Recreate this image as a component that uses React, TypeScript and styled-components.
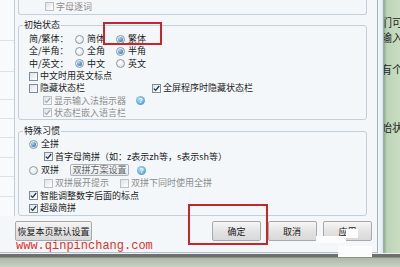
import React from 'react'
import styled, { createGlobalStyle } from 'styled-components'

const GlobalStyle = createGlobalStyle`
  html, body {
    margin: 0;
    padding: 0;
    width: 400px;
    height: 267px;
    overflow: hidden;
  }
  body {
    font-family: "Noto Sans CJK SC", "Liberation Sans", sans-serif;
    font-size: 9px;
    color: #1b1b1b;
  }
`

const Screen = styled.div`
  position: relative;
  width: 400px;
  height: 267px;
  display: flex;
  flex-direction: column;
  overflow: hidden;
`

const TopArea = styled.div`
  display: flex;
  height: 253px;
`

const Dialog = styled.div`
  position: relative;
  width: 378px;
  height: 253px;
  box-sizing: border-box;
  display: flex;
  flex-direction: column;
  background: #f3f7fa;
  border-right: 1px solid #9fb0bd;
  border-bottom: 1px solid #b4c1cb;
`

const Frame = styled.div`
  width: 5px;
  background: linear-gradient(90deg, #f4f8fa, #dfe8ee);
  border-right: 1px solid #9aa9b4;
`

const GreenStrip = styled.div`
  flex: 1;
  overflow: hidden;
  padding-top: 17px;
  background: linear-gradient(90deg, #93ab90 0, #bcd5b5 3px, #c8ddc2 100%);
  font-size: 11px;
  line-height: 11px;
  color: #262626;
`

const StripLine = styled.div<{ $mt: number }>`
  margin-top: ${p => p.$mt}px;
  margin-left: -3px;
  white-space: nowrap;
`

const BottomBand = styled.div`
  flex: 1;
  background: linear-gradient(#e6ecef 0, #e6ecef 1px, #727272 1px, #6a6a6a 4px, #aeb8ab 5px, #c7d2c3 100%);
`

const Body = styled.div`
  display: flex;
  height: 216px;
`

const Sidebar = styled.div`
  width: 15px;
  box-sizing: border-box;
  background: #f8fafc;
  border-right: 1px solid #c5cfd8;
  display: flex;
  flex-direction: column;
`

const SideRow = styled.div<{ $h: number }>`
  height: ${p => p.$h}px;
  border-bottom: 1px solid #dbe2e8;
  flex: none;
`

const Groups = styled.div`
  width: 349px;
  margin-left: 3px;
  display: flex;
  flex-direction: column;
`

const CutGroup = styled.div`
  height: 15px;
  box-sizing: border-box;
  border: 1px solid #c3cfd9;
  border-top: none;
  border-radius: 0 0 3px 3px;
  padding-left: 26px;
`

const Group = styled.fieldset<{ $mt: number; $pt: number }>`
  margin: ${p => p.$mt}px 0 0;
  padding: ${p => p.$pt}px 0 0 10px;
  border: 1px solid #c3cfd9;
  border-radius: 3px;
  min-width: 0;
`

const Legend = styled.legend`
  margin-left: -6px;
  padding: 0 1px;
  line-height: 10px;
  font-size: 9px;
  color: #1b1b1b;
`

const Row = styled.div<{ $h?: number; $indent?: number }>`
  display: flex;
  align-items: center;
  height: ${p => p.$h ?? 12.3}px;
  padding-left: ${p => p.$indent ?? 0}px;
  white-space: nowrap;
  line-height: 10px;
`

const Label = styled.span`
  width: 46px;
  flex: none;
`

const Item = styled.span<{ $w?: number; $disabled?: boolean }>`
  display: inline-flex;
  align-items: center;
  ${p => (p.$w ? `width: ${p.$w}px; flex: none;` : '')}
  color: ${p => (p.$disabled ? '#8c8c8c' : '#1b1b1b')};
`

const Box = styled.span<{ $disabled?: boolean }>`
  width: 9px;
  height: 9px;
  box-sizing: border-box;
  margin-right: 2px;
  border: 1px solid ${p => (p.$disabled ? '#b9c1c8' : '#7f8c98')};
  background: linear-gradient(135deg, #dce3e9, #ffffff);
  display: inline-flex;
  align-items: center;
  justify-content: center;
  flex: none;
`

const RadioDot = styled.span<{ $on?: boolean }>`
  width: 9px;
  height: 9px;
  box-sizing: border-box;
  margin-right: 3px;
  border-radius: 50%;
  border: 1px solid #8c98a3;
  background: radial-gradient(circle at 40% 35%, #ffffff, #d5dde4);
  display: inline-flex;
  align-items: center;
  justify-content: center;
  flex: none;
  &::after {
    content: '';
    display: ${p => (p.$on ? 'block' : 'none')};
    width: 5px;
    height: 5px;
    border-radius: 50%;
    background: radial-gradient(circle at 35% 30%, #a9d6ff, #1d5ba8);
  }
`

const Help = styled.span<{ $ml: number }>`
  margin-left: ${p => p.$ml}px;
  width: 9px;
  height: 9px;
  border-radius: 50%;
  background: radial-gradient(circle at 40% 35%, #b2ddf7, #2f8ad3);
  color: #ffffff;
  font: bold 7px/9px "Liberation Sans", sans-serif;
  text-align: center;
  flex: none;
`

const SchemeButton = styled.span`
  margin-left: 11px;
  width: 59px;
  height: 12px;
  box-sizing: border-box;
  border: 1px solid #a8b3bc;
  border-radius: 2px;
  background: linear-gradient(#f7f9fa, #e6eaed);
  color: #666666;
  display: inline-flex;
  align-items: center;
  justify-content: center;
  flex: none;
`

const Footer = styled.div`
  flex: 1;
  display: flex;
  justify-content: space-between;
  align-items: flex-start;
  padding: 5px 5px 0 15px;
`

const ButtonGroup = styled.div`
  display: flex;
  gap: 6.5px;
`

const Button = styled.span<{ $w: number }>`
  width: ${p => p.$w}px;
  height: 20px;
  box-sizing: border-box;
  border: 1px solid #a9a9a9;
  border-radius: 2px;
  background: linear-gradient(#f6f6f6, #e2e2e2 55%, #d9d9d9);
  display: inline-flex;
  align-items: center;
  justify-content: center;
  color: #1b1b1b;
`

const RedFrame = styled.div<{ $x: number; $y: number; $w: number; $h: number }>`
  position: absolute;
  left: ${p => p.$x}px;
  top: ${p => p.$y}px;
  width: ${p => p.$w}px;
  height: ${p => p.$h}px;
  box-sizing: border-box;
  border: 2px solid #c9252b;
  pointer-events: none;
`

const Watermark = styled.div`
  position: absolute;
  left: 16px;
  top: 239px;
  font: 12px/14px "Liberation Mono", monospace;
  color: #e3312d;
  white-space: nowrap;
`

const Smudge = styled.div<{ $x: number; $y: number; $w: number; $h: number }>`
  position: absolute;
  left: ${p => p.$x}px;
  top: ${p => p.$y}px;
  width: ${p => p.$w}px;
  height: ${p => p.$h}px;
  background: #fbfcfb;
  filter: blur(0.6px);
`

const Check = ({ on, disabled }: { on?: boolean; disabled?: boolean }) => (
  <Box $disabled={disabled}>
    {on && (
      <svg width="7" height="7" viewBox="0 0 7 7">
        <path d="M0.8 3.6 L2.7 5.4 L6.2 1" fill="none" stroke={disabled ? '#a3abb3' : '#1e3550'} strokeWidth="1.3" />
      </svg>
    )}
  </Box>
)

const CheckItem = ({ text, on, disabled, w }: { text: string; on?: boolean; disabled?: boolean; w?: number }) => (
  <Item $w={w} $disabled={disabled}>
    <Check on={on} disabled={disabled} />
    {text}
  </Item>
)

const RadioItem = ({ text, on, w }: { text: string; on?: boolean; w?: number }) => (
  <Item $w={w}>
    <RadioDot $on={on} />
    {text}
  </Item>
)

const radioRows = [
  { label: '简/繁体：', a: '简体', b: '繁体', sel: 1 },
  { label: '全/半角：', a: '全角', b: '半角', sel: 1 },
  { label: '中/英文：', a: '中文', b: '英文', sel: 0 },
]

const sideRows = [40, 30, 27, 18, 18, 19, 18, 19]

export default function App() {
  return (
    <Screen>
      <GlobalStyle />
      <TopArea>
        <Dialog>
          <Body>
            <Sidebar>
              {sideRows.map((h, i) => (
                <SideRow key={i} $h={h} />
              ))}
            </Sidebar>
            <Groups>
              <CutGroup>
                <Row $h={13}>
                  <CheckItem text="字母逐词" disabled />
                </Row>
              </CutGroup>

              <Group $mt={5} $pt={3}>
                <Legend>初始状态</Legend>
                {radioRows.map(r => (
                  <Row key={r.label}>
                    <Label>{r.label}</Label>
                    <RadioItem text={r.a} on={r.sel === 0} w={41} />
                    <RadioItem text={r.b} on={r.sel === 1} />
                  </Row>
                ))}
                <Row>
                  <CheckItem text="中文时用英文标点" />
                </Row>
                <Row>
                  <CheckItem text="隐藏状态栏" w={123} />
                  <CheckItem text="全屏程序时隐藏状态栏" on />
                </Row>
                <Row $indent={14}>
                  <CheckItem text="显示输入法指示器" on disabled />
                  <Help $ml={10}>?</Help>
                </Row>
                <Row $indent={14}>
                  <CheckItem text="状态栏嵌入语言栏" on disabled />
                </Row>
              </Group>

              <Group $mt={6} $pt={2}>
                <Legend>特殊习惯</Legend>
                <Row $h={12.5}>
                  <RadioItem text="全拼" on />
                </Row>
                <Row $h={12.5} $indent={15}>
                  <CheckItem text="首字母简拼（如：z表示zh等，s表示sh等）" on />
                </Row>
                <Row $h={14}>
                  <RadioItem text="双拼" />
                  <SchemeButton>双拼方案设置</SchemeButton>
                  <Help $ml={8}>?</Help>
                </Row>
                <Row $h={12.5} $indent={15}>
                  <CheckItem text="双拼展开提示" disabled w={76} />
                  <CheckItem text="双拼下同时使用全拼" disabled />
                </Row>
                <Row $h={12.5}>
                  <CheckItem text="智能调整数字后面的标点" on />
                </Row>
                <Row $h={12.5}>
                  <CheckItem text="超级简拼" on />
                </Row>
              </Group>
            </Groups>
          </Body>

          <Footer>
            <Button $w={77}>恢复本页默认设置</Button>
            <ButtonGroup>
              <Button $w={49}>确定</Button>
              <Button $w={49}>取消</Button>
              <Button $w={49}>应用</Button>
            </ButtonGroup>
          </Footer>
        </Dialog>
        <Frame />
        <GreenStrip>
          <StripLine $mt={0}>们可</StripLine>
          <StripLine $mt={4}>输入</StripLine>
          <StripLine $mt={21}>有个</StripLine>
          <StripLine $mt={47}>始状</StripLine>
        </GreenStrip>
      </TopArea>
      <BottomBand />

      <Watermark>www.qinpinchang.com</Watermark>
      <RedFrame $x={103} $y={22} $w={59} $h={23} />
      <RedFrame $x={188} $y={204} $w={80} $h={41} />
      <Smudge $x={316} $y={236} $w={30} $h={7} />
      <Smudge $x={338} $y={246} $w={34} $h={11} />
      <Smudge $x={346} $y={229} $w={12} $h={9} />
    </Screen>
  )
}
